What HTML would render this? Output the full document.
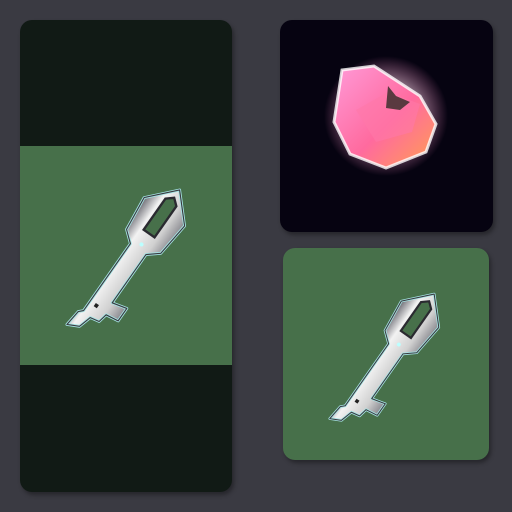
<!DOCTYPE html>
<html><head><style>
html,body{margin:0;padding:0;background:#3a3a42;width:512px;height:512px;overflow:hidden}
.c{position:absolute;border-radius:12px;overflow:hidden;box-shadow:2px 3px 4px rgba(0,0,0,.35)}
</style></head><body>
<div class="c" style="left:20px;top:20px;width:212px;height:472px;background:#111a15">
  <div style="position:absolute;left:0;top:126px;width:212px;height:219px;background:#47704a"></div>
</div>
<div class="c" style="left:280px;top:20px;width:213px;height:212px;background:#060311"></div>
<div class="c" style="left:283px;top:248px;width:206px;height:212px;background:#47704a"></div>
<svg width="512" height="512" style="position:absolute;left:0;top:0">
<defs>
<radialGradient id="glow" cx="50%" cy="50%" r="50%">
<stop offset="0" stop-color="#fff" stop-opacity=".9"/><stop offset=".6" stop-color="#ffd0e8" stop-opacity=".5"/><stop offset="1" stop-color="#ff80c0" stop-opacity="0"/></radialGradient>
<linearGradient id="gem" x1="0" y1="0" x2="1" y2="1"><stop offset="0" stop-color="#ff9ad8"/><stop offset=".55" stop-color="#ff6a9e"/><stop offset="1" stop-color="#ffa050"/></linearGradient>
<linearGradient id="met" x1="0" y1="0" x2="1" y2="0"><stop offset="0" stop-color="#6a6a72"/><stop offset=".3" stop-color="#f2f2f2"/><stop offset=".7" stop-color="#d0d0d0"/><stop offset="1" stop-color="#8a8a90"/></linearGradient>
<g id="key">
 <path d="M-26 -8 L0 -36 L26 -8 L22 30 L10 40 L10 102 L26 98 L26 114 L12 116 L10 126 L0 128 L-4 142 L-16 148 L-14 130 L-10 126 L-10 40 L-22 30 Z" fill="url(#met)" stroke="#a6e4e4" stroke-width="3" stroke-linejoin="round"/>
 <path d="M-26 -8 L0 -36 L26 -8 L22 30 L10 40 L10 102 L26 98 L26 114 L12 116 L10 126 L0 128 L-4 142 L-16 148 L-14 130 L-10 126 L-10 40 L-22 30 Z" fill="none" stroke="#3a3a40" stroke-width="1.2" stroke-linejoin="round"/>
 <path d="M-7 -20 L0 -26 L7 -20 L7 20 L-7 20 Z" fill="#47704a" stroke="#2a2a30" stroke-width="2.5"/>
 <circle cx="0" cy="34" r="2.2" fill="#bff"/>
 <rect x="-4" y="112" width="4" height="4" fill="#222"/>
</g>
</defs>
<use href="#key" transform="translate(160,218) rotate(35) scale(0.95)"/>
<use href="#key" transform="translate(416,320) rotate(35) scale(0.88)"/>
<ellipse cx="386" cy="116" rx="62" ry="60" fill="url(#glow)"/>
<polygon points="342,70 374,66 420,96 436,124 426,152 386,168 350,154 334,122" fill="url(#gem)" stroke="#fff" stroke-width="3" stroke-opacity=".8"/>
<polygon points="356,110 388,92 420,104 412,132 376,142" fill="#ff78a8" opacity=".6"/>
<path d="M388 86 L396 96 L410 102 L400 110 L386 108 Z" fill="#5a3a40"/>
</svg>
</body></html>
